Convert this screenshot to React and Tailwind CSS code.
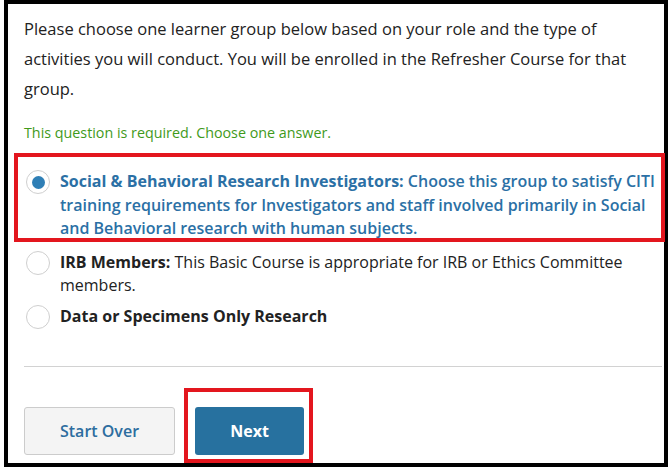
import React, { useState } from 'react';

const options = [
  {
    id: 'sbr',
    label: 'Social & Behavioral Research Investigators:',
    text: ' Choose this group to satisfy CITI training requirements for Investigators and staff involved primarily in Social and Behavioral research with human subjects.',
  },
  {
    id: 'irb',
    label: 'IRB Members:',
    text: ' This Basic Course is appropriate for IRB or Ethics Committee members.',
  },
  {
    id: 'data',
    label: 'Data or Specimens Only Research',
    text: '',
  },
];

const Radio = ({ checked }) => (
  <span className="ml-[2px] mr-[10px] flex h-6 w-6 shrink-0 items-center justify-center rounded-full border border-[#cfcfcf] bg-white">
    {checked && <span className="h-[13px] w-[13px] rounded-full bg-[#2f7fb6]"></span>}
  </span>
);

const App = () => {
  const [selected, setSelected] = useState('sbr');

  return (
    <div className="relative h-[473px] w-[668px] bg-white font-['Open_Sans',sans-serif] text-[#222]">
      <div className="ml-[4px] h-[467px] w-[664px] border-4 border-black bg-white pl-[16px] pr-[2px] pt-[10px]">
        <p className="text-[16.5px] leading-[30px]">
          Please choose one learner group below based on your role and the type of activities you will conduct. You will be enrolled in the Refresher Course for that group.
        </p>
        <p className="mt-[19px] text-[14.3px] leading-[20px] text-[#3f9a1b]">
          This question is required. Choose one answer.
        </p>

        <div className="mt-[27px] flex flex-col">
          {options.map((opt, i) => {
            const checked = selected === opt.id;
            return (
              <label
                key={opt.id}
                onClick={() => setSelected(opt.id)}
                className={`flex cursor-pointer items-start text-[16px] leading-[23.5px] ${i === 1 ? 'mt-[10px]' : ''} ${i === 2 ? 'mt-[7px]' : ''} ${checked ? 'font-semibold text-[#2b70a5]' : 'text-[#222]'}`}
              >
                <Radio checked={checked} />
                <span>
                  <span className="font-bold">{opt.label}</span>
                  {opt.text}
                </span>
              </label>
            );
          })}
        </div>

        <div className="mt-[37px] border-t border-[#d2d2d2]"></div>

        <div className="mt-[40px] flex gap-[20px]">
          <button className="h-[48px] w-[151px] rounded-[3px] border border-[#cccccc] bg-[#f4f4f4] text-[16px] font-semibold text-[#2d6d9f]">
            Start Over
          </button>
          <button className="h-[48px] w-[109px] rounded-[3px] bg-[#27719f] text-[16px] font-bold text-white">
            Next
          </button>
        </div>
      </div>

      {/* annotation boxes */}
      <div className="pointer-events-none absolute left-[14px] top-[153px] h-[89px] w-[651px] border-4 border-[#e3161e]"></div>
      <div className="pointer-events-none absolute left-[184px] top-[388px] h-[75px] w-[129px] border-4 border-[#e3161e]"></div>
    </div>
  );
};

export default App;
